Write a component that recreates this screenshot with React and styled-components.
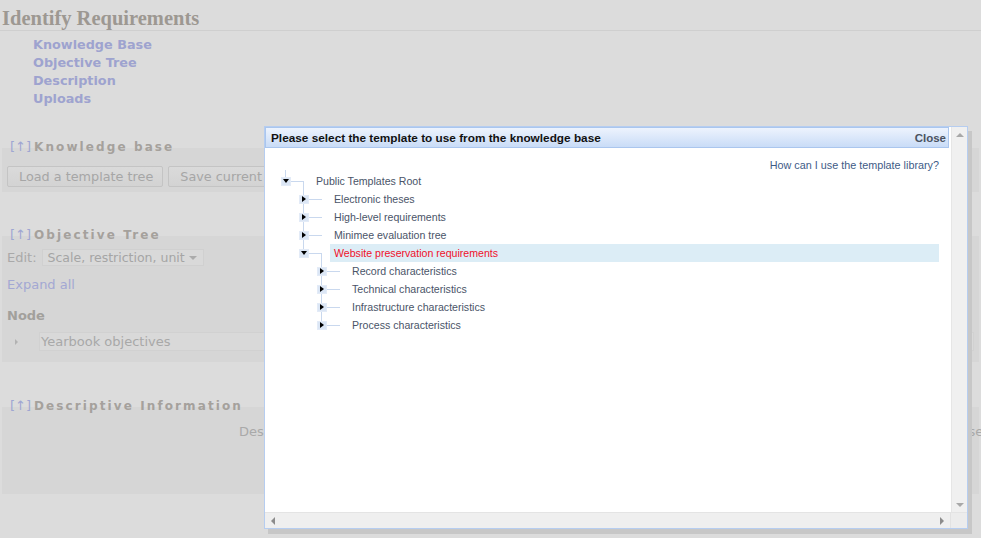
import React from 'react';
import styled, { createGlobalStyle, css } from 'styled-components';

const GlobalStyle = createGlobalStyle`
  html, body {
    margin: 0;
    padding: 0;
    background: #dcdcdc;
    overflow: hidden;
  }
  body {
    font-family: "DejaVu Sans", Verdana, sans-serif;
    width: 981px;
    height: 538px;
  }
`;

/* ---------- dimmed page behind the dialog ---------- */

const Page = styled.div`
  position: relative;
  width: 981px;
  height: 538px;
  overflow: hidden;
  background: #dcdcdc;
`;

const Title = styled.h1`
  margin: 0;
  padding: 6px 0 0 2px;
  height: 24px;
  line-height: 24px;
  font-family: "Liberation Serif", "Times New Roman", serif;
  font-size: 20.5px;
  font-weight: bold;
  color: #9d9892;
  border-bottom: 1px solid #cfcfcf;
`;

const NavList = styled.ul`
  list-style: none;
  margin: 5px 0 0;
  padding: 0 0 0 33px;
`;

const NavLink = styled.li`
  height: 18px;
  line-height: 18px;
  font-size: 12.8px;
  font-weight: bold;
  color: #9ea3cf;
`;

const Section = styled.section`
  margin-top: ${(p) => p.$top}px;
`;

const SectionHeader = styled.h2`
  margin: 0;
  padding-left: 10px;
  height: 16px;
  line-height: 16px;
  font-size: 12px;
  font-weight: bold;
  letter-spacing: 2.1px;
  color: #a5a19c;
`;

const Up = styled.span`
  color: #9fa6d2;
  font-size: 13px;
  font-weight: normal;
  letter-spacing: 0;
  margin-right: 3px;
`;

const Block = styled.div`
  margin: -7px 2px 0;
  padding: ${(p) => p.$pad};
  height: ${(p) => (p.$height ? `${p.$height}px` : 'auto')};
  background: #d6d6d6;
  box-sizing: border-box;
`;

const ButtonRow = styled.div`
  display: flex;
  gap: 5px;
`;

const Button = styled.button`
  height: 21px;
  padding: 0 9px 0 11px;
  font-family: "DejaVu Sans", Verdana, sans-serif;
  font-size: 12.8px;
  color: #a6a6a6;
  background: linear-gradient(#dadada, #d3d3d3);
  border: 1px solid #c4c4c4;
  border-radius: 2px;
  white-space: nowrap;
`;

const EditRow = styled.div`
  display: flex;
  align-items: center;
  gap: 5px;
  height: 17px;
  font-size: 13px;
  color: #a9a9a9;
`;

const Select = styled.div`
  display: flex;
  align-items: center;
  justify-content: space-between;
  width: 162px;
  height: 17px;
  padding: 0 6px 0 5px;
  box-sizing: border-box;
  background: #d9d9d9;
  border: 1px solid #d0d0d0;
  color: #a5a5a5;
  font-size: 12.5px;
  white-space: nowrap;
`;

const Caret = styled.span`
  width: 0;
  height: 0;
  border-left: 4px solid transparent;
  border-right: 4px solid transparent;
  border-top: 4px solid #ababab;
`;

const Link = styled.div`
  margin-top: ${(p) => p.$top}px;
  height: 16px;
  line-height: 16px;
  font-size: 13px;
  color: #a3a8d3;
`;

const Label = styled.div`
  margin-top: 15px;
  height: 16px;
  line-height: 16px;
  font-size: 13px;
  font-weight: bold;
  color: #a2a09c;
`;

const NodeRow = styled.div`
  display: flex;
  align-items: center;
  margin-top: 9px;
  height: 17px;
`;

const NodeArrow = styled.span`
  width: 0;
  height: 0;
  margin: 0 21px 0 8px;
  border-top: 3px solid transparent;
  border-bottom: 3px solid transparent;
  border-left: 3px solid #b2b2b2;
`;

const NodeBox = styled.div`
  flex: 1;
  height: 17px;
  line-height: 17px;
  padding-left: 1px;
  background: #d9d9d9;
  border: 1px solid #d1d1d1;
  font-size: 13px;
  color: #a8a8a8;
`;

const DescRow = styled.div`
  display: flex;
  height: 16px;
  line-height: 16px;
  font-size: 13px;
  color: #a9a9a9;
  white-space: nowrap;
`;

const DescCell = styled.span`
  flex: 0 0 ${(p) => p.$w}px;
`;

/* ---------- template dialog ---------- */

const Dialog = styled.div`
  position: absolute;
  left: 264px;
  top: 126px;
  width: 704px;
  height: 403px;
  box-sizing: border-box;
  display: flex;
  flex-direction: column;
  background: #fff;
  border: 1px solid #b6cdf0;
  box-shadow: 4px 5px 0 #c7c7c7;
  font-family: "Liberation Sans", Arial, sans-serif;
`;

const DialogBody = styled.div`
  flex: 1;
  display: flex;
  min-height: 0;
`;

const Viewport = styled.div`
  flex: 1;
  display: flex;
  flex-direction: column;
`;

const TitleBar = styled.div`
  display: flex;
  align-items: center;
  justify-content: space-between;
  height: 21px;
  margin-right: 2px;
  padding: 0 2px 0 5px;
  box-sizing: border-box;
  background: linear-gradient(#edf3fd, #c9dcf7);
  border: 1px solid #aac6ee;
  font-size: 11.8px;
  font-weight: bold;
  color: #111;
`;

const CloseLink = styled.span`
  color: #4a5260;
  font-size: 11.5px;
`;

const Content = styled.div`
  padding: 10px 12px 0 16px;
  font-size: 10.6px;
`;

const HelpLink = styled.div`
  height: 14px;
  line-height: 14px;
  text-align: right;
  font-size: 10.8px;
  color: #3e5b86;
`;

const line = '#c9d8ee';

const Group = styled.div`
  margin-left: 18px;
`;

const Item = styled.div`
  position: relative;

  &::before {
    content: '';
    position: absolute;
    left: 4px;
    top: -9px;
    width: 1px;
    height: ${(p) => (p.$last ? '18px' : 'calc(100% + 9px)')};
    background: ${line};
  }
`;

const Row = styled.div`
  position: relative;
  display: flex;
  align-items: center;
  height: 18px;

  ${(p) =>
    p.$root &&
    css`
      &::before {
        content: '';
        position: absolute;
        left: 4px;
        top: -2px;
        height: 8px;
        width: 1px;
        background: ${line};
      }
    `}
`;

const Toggle = styled.span`
  position: relative;
  z-index: 1;
  display: flex;
  align-items: center;
  justify-content: center;
  width: 10px;
  height: 9px;
  box-sizing: border-box;
  background: #dbe6f5;
  border: 1px solid #e3ebf7;

  &::after {
    content: '';
    width: 0;
    height: 0;
    ${(p) =>
      p.$open
        ? css`
            border-left: 3px solid transparent;
            border-right: 3px solid transparent;
            border-top: 4px solid #000;
          `
        : css`
            border-top: 3px solid transparent;
            border-bottom: 3px solid transparent;
            border-left: 4px solid #000;
          `}
  }
`;

const Connector = styled.span`
  width: 13px;
  height: 1px;
  margin-right: 8px;
  background: ${line};
`;

const NodeLabel = styled.span`
  flex: 1;
  height: 18px;
  line-height: 18px;
  padding-left: 4px;
  color: ${(p) => (p.$selected ? '#f0102a' : '#4a5468')};
  background: ${(p) => (p.$selected ? '#dcedf6' : 'transparent')};
  white-space: nowrap;
`;

const VScroll = styled.div`
  width: 16px;
  display: flex;
  flex-direction: column;
  justify-content: space-between;
  align-items: center;
  padding: 6px 0 5px;
  box-sizing: border-box;
  background: #f0f0f0;
  border-left: 1px solid #e6e6e6;
`;

const HScrollRow = styled.div`
  display: flex;
  height: 15px;
  border-top: 1px solid #e4e4e4;
`;

const HScroll = styled.div`
  flex: 1;
  display: flex;
  align-items: center;
  justify-content: space-between;
  padding: 0 6px 0 6px;
  background: #efefef;
`;

const Corner = styled.div`
  width: 16px;
  background: #ececec;
  border-left: 1px solid #e2e2e2;
`;

const Arrow = styled.span`
  width: 0;
  height: 0;
  ${(p) =>
    ({
      up: css`
        border-left: 4px solid transparent;
        border-right: 4px solid transparent;
        border-bottom: 4px solid #a8a8a8;
      `,
      down: css`
        border-left: 4px solid transparent;
        border-right: 4px solid transparent;
        border-top: 4px solid #a8a8a8;
      `,
      left: css`
        border-top: 4px solid transparent;
        border-bottom: 4px solid transparent;
        border-right: 4px solid #8c8c8c;
      `,
      right: css`
        border-top: 4px solid transparent;
        border-bottom: 4px solid transparent;
        border-left: 4px solid #8c8c8c;
      `,
    })[p.$dir]}
`;

const templates = {
  label: 'Public Templates Root',
  open: true,
  children: [
    { label: 'Electronic theses' },
    { label: 'High-level requirements' },
    { label: 'Minimee evaluation tree' },
    {
      label: 'Website preservation requirements',
      open: true,
      selected: true,
      children: [
        { label: 'Record characteristics' },
        { label: 'Technical characteristics' },
        { label: 'Infrastructure characteristics' },
        { label: 'Process characteristics' },
      ],
    },
  ],
};

const TreeNode = ({ node, root }) => (
  <>
    <Row $root={root}>
      <Toggle $open={node.open} />
      <Connector />
      <NodeLabel $selected={node.selected}>{node.label}</NodeLabel>
    </Row>
    {node.open && node.children && (
      <Group>
        {node.children.map((child, i) => (
          <Item key={child.label} $last={i === node.children.length - 1}>
            <TreeNode node={child} />
          </Item>
        ))}
      </Group>
    )}
  </>
);

const TemplateDialog = () => (
  <Dialog>
    <DialogBody>
      <Viewport>
        <TitleBar>
          <span>Please select the template to use from the knowledge base</span>
          <CloseLink>Close</CloseLink>
        </TitleBar>
        <Content>
          <HelpLink>How can I use the template library?</HelpLink>
          <TreeNode node={templates} root />
        </Content>
      </Viewport>
      <VScroll>
        <Arrow $dir="up" />
        <Arrow $dir="down" />
      </VScroll>
    </DialogBody>
    <HScrollRow>
      <HScroll>
        <Arrow $dir="left" />
        <Arrow $dir="right" />
      </HScroll>
      <Corner />
    </HScrollRow>
  </Dialog>
);

const App = () => (
  <>
    <GlobalStyle />
    <Page>
      <Title>Identify Requirements</Title>
      <NavList>
        <NavLink>Knowledge Base</NavLink>
        <NavLink>Objective Tree</NavLink>
        <NavLink>Description</NavLink>
        <NavLink>Uploads</NavLink>
      </NavList>

      <Section $top={31}>
        <SectionHeader>
          <Up>[↑]</Up>Knowledge base
        </SectionHeader>
        <Block $pad="18px 5px 0" $height={44}>
          <ButtonRow>
            <Button>Load a template tree</Button>
            <Button>Save current tree as template</Button>
          </ButtonRow>
        </Block>
      </Section>

      <Section $top={35}>
        <SectionHeader>
          <Up>[↑]</Up>Objective Tree
        </SectionHeader>
        <Block $pad="13px 5px 12px">
          <EditRow>
            Edit:
            <Select>
              Scale, restriction, unit
              <Caret />
            </Select>
          </EditRow>
          <Link $top={11}>Expand all</Link>
          <Label>Node</Label>
          <NodeRow>
            <NodeArrow />
            <NodeBox>Yearbook objectives</NodeBox>
          </NodeRow>
        </Block>
      </Section>

      <Section $top={36}>
        <SectionHeader>
          <Up>[↑]</Up>Descriptive Information
        </SectionHeader>
        <Block $pad="17px 5px 0 237px" $height={87}>
          <DescRow>
            <DescCell $w={720}>Description</DescCell>
            <DescCell $w={80}>Use</DescCell>
          </DescRow>
        </Block>
      </Section>

      <TemplateDialog />
    </Page>
  </>
);

export default App;
